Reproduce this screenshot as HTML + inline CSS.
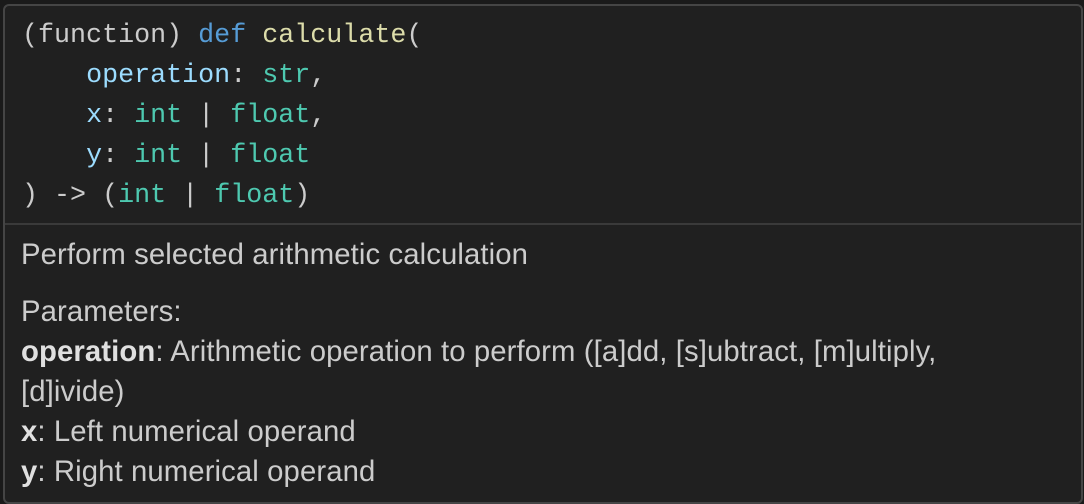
<!DOCTYPE html>
<html><head><style>
html,body{margin:0;padding:0;width:1084px;height:504px;background:#1a1a1a;overflow:hidden}
.bg{position:absolute;left:35px;top:-24px;font:26.8px "Liberation Mono",monospace;color:#4e6a3f;opacity:.7}
.w{position:absolute;left:3px;top:4px;width:1076px;height:496px;background:#202020;border:2px solid #454545;border-radius:6px;box-sizing:content-box}
.code{position:absolute;left:17px;top:0px;font:26.7px/40px "Liberation Mono",monospace;color:#cccccc;white-space:pre;padding-top:10px}
.sep{position:absolute;left:0;right:0;top:217px;height:2px;background:#3a3a3a}
.doc{position:absolute;left:16px;top:229px;font:29.3px/40px "Liberation Sans",sans-serif;color:#cccccc;letter-spacing:0.1px;width:1050px}
.k{color:#569cd6}.f{color:#dcdcaa}.p{color:#9cdcfe}.t{color:#4ec9b0}
b{color:#e0e0e0}
</style></head><body>
<div class="bg"># subtract</div>
<div class="w">
<div class="code">(function) <span class="k">def</span> <span class="f">calculate</span>(
    <span class="p">operation</span>: <span class="t">str</span>,
    <span class="p">x</span>: <span class="t">int</span> | <span class="t">float</span>,
    <span class="p">y</span>: <span class="t">int</span> | <span class="t">float</span>
) -&gt; (<span class="t">int</span> | <span class="t">float</span>)</div>
<div class="sep"></div>
<div class="doc">Perform selected arithmetic calculation<div style="height:17px"></div>Parameters:<br><b>operation</b>: Arithmetic operation to perform ([a]dd, [s]ubtract, [m]ultiply,<br>[d]ivide)<br><b>x</b>: Left numerical operand<br><b>y</b>: Right numerical operand</div>
</div>
</body></html>
